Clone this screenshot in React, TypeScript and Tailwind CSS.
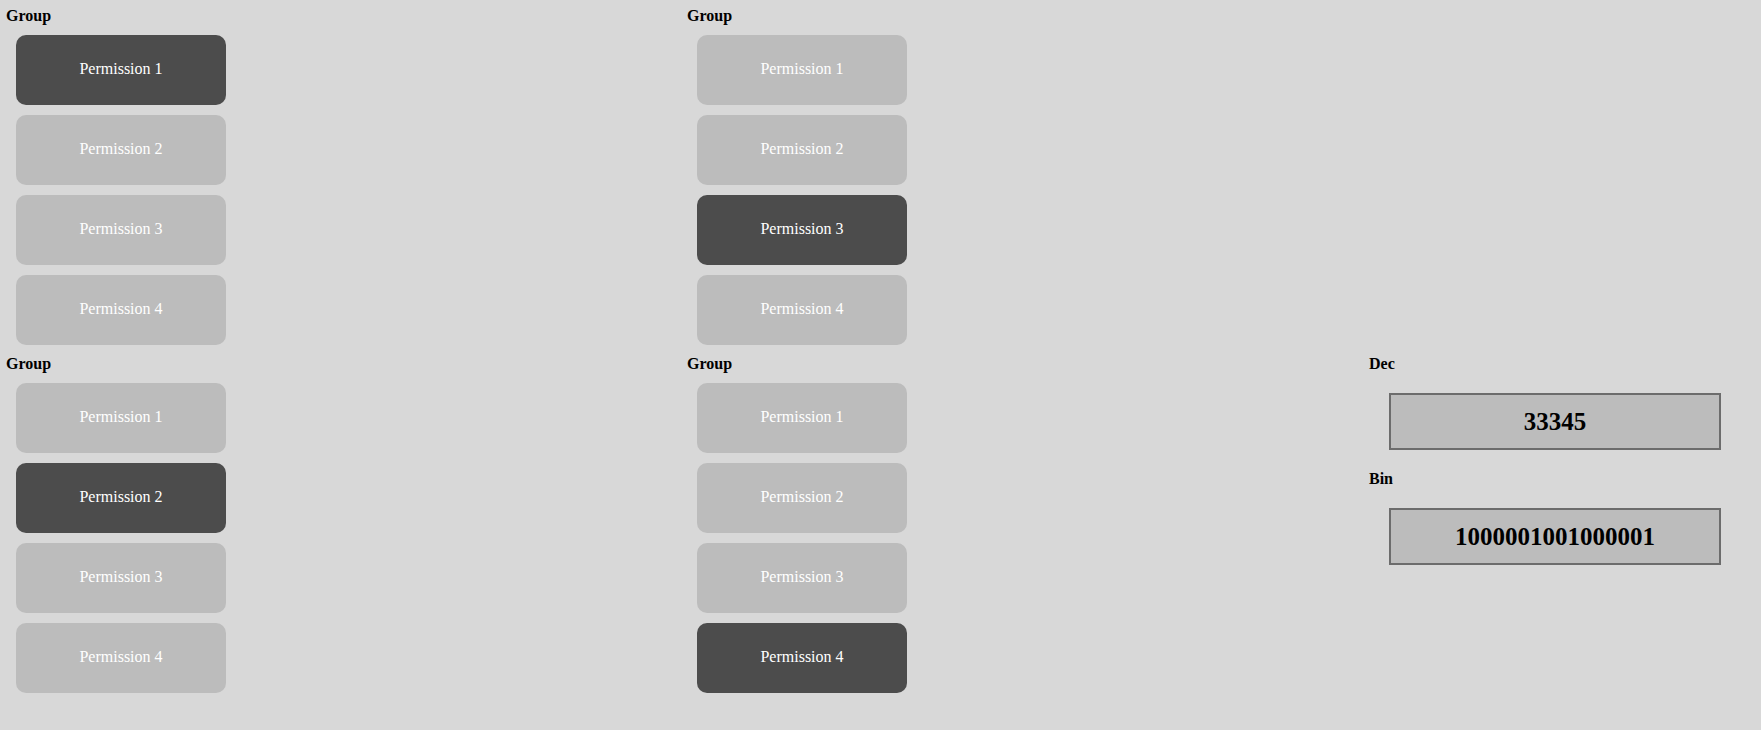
import React from "react";

const serif = { fontFamily: '"Liberation Serif", "Times New Roman", serif' };

function Group({ active }: { active: number }) {
  return (
    <div className="flex flex-col pt-[7px] pb-[3px]">
      <div className="pl-[6px] h-[18px] leading-[18px] text-[16px] font-bold text-black">Group</div>
      <div className="flex flex-col gap-[10px] mt-[10px] pl-[16px]">
        {[1, 2, 3, 4].map((n) => (
          <div
            key={n}
            className={
              "w-[210px] h-[70px] rounded-[10px] flex items-center justify-center pb-[2px] text-[16px] text-white " +
              (n === active ? "bg-[#4c4c4c]" : "bg-[#bcbcbc]")
            }
          >
            Permission {n}
          </div>
        ))}
      </div>
    </div>
  );
}

function ValueBox({ label, value }: { label: string; value: string }) {
  return (
    <div className="flex flex-col">
      <div className="pl-[6px] h-[18px] leading-[18px] text-[16px] font-bold text-black">{label}</div>
      <div className="mt-[20px] ml-[26px] w-[332px] h-[57px] border-2 border-[#6c6c6c] bg-[#bcbcbc] flex items-center justify-center text-[25px] font-bold text-black">
        {value}
      </div>
    </div>
  );
}

export default function App() {
  return (
    <div className="w-[1761px] h-[730px] bg-[#d8d8d8] overflow-hidden" style={serif}>
      <div className="grid grid-cols-[681px_682px_1fr]">
        <Group active={1} />
        <Group active={3} />
        <div />
        <Group active={2} />
        <Group active={4} />
        <div className="flex flex-col gap-[20px] pt-[7px]">
          <ValueBox label="Dec" value="33345" />
          <ValueBox label="Bin" value="1000001001000001" />
        </div>
      </div>
    </div>
  );
}
